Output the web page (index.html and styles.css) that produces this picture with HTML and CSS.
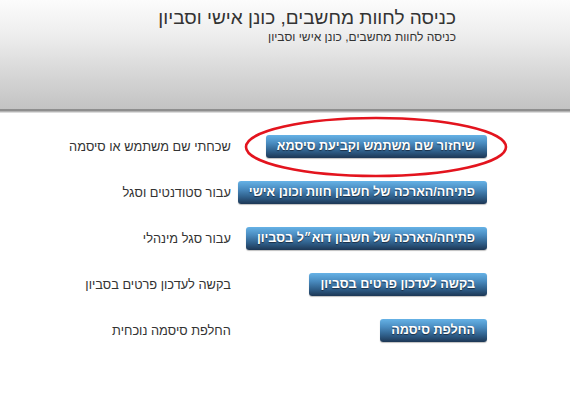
FILE: index.html
```html
<!DOCTYPE html>
<html lang="he" dir="rtl">
<head>
<meta charset="utf-8">
<title>כניסה לחוות מחשבים</title>
<link rel="stylesheet" href="styles.css">
</head>
<body>
<header class="hdr">
  <h1 class="hdr-title">כניסה לחוות מחשבים, כונן אישי וסביון</h1>
  <p class="hdr-sub">כניסה לחוות מחשבים, כונן אישי וסביון</p>
</header>
<main class="content">
  <div class="links">
    <a class="btn" href="#">שיחזור שם משתמש וקביעת סיסמא</a>
    <span class="lbl">שכחתי שם משתמש או סיסמה</span>
    <a class="btn" href="#">פתיחה/הארכה של חשבון חוות וכונן אישי</a>
    <span class="lbl">עבור סטודנטים וסגל</span>
    <a class="btn" href="#">פתיחה/הארכה של חשבון דוא״ל בסביון</a>
    <span class="lbl">עבור סגל מינהלי</span>
    <a class="btn" href="#">בקשה לעדכון פרטים בסביון</a>
    <span class="lbl">בקשה לעדכון פרטים בסביון</span>
    <a class="btn" href="#">החלפת סיסמה</a>
    <span class="lbl">החלפת סיסמה נוכחית</span>
  </div>
</main>
<svg class="mark" width="270" height="66" viewBox="0 0 270 66" aria-hidden="true">
  <ellipse cx="135" cy="33" rx="130" ry="29" fill="none" stroke="#e3141e" stroke-width="2.6"/>
</svg>
</body>
</html>
```
FILE: styles.css
```css
html, body {
  margin: 0;
  padding: 0;
  background: #ffffff;
}
body {
  font-family: "Liberation Sans", Arial, sans-serif;
  color: #333333;
  position: relative;
  min-height: 416px;
}
.hdr {
  height: 111px;
  box-sizing: border-box;
  padding: 5px 114px 0 0;
  background: linear-gradient(to bottom, #fcfcfc 0%, #ececec 35%, #d2d2d2 75%, #c3c3c3 100%);
  border-bottom: 2px solid #8e8e8e;
  box-shadow: 0 1px 0 #b4b4b4, 0 2px 0 #dcdcdc;
}
.hdr-title {
  margin: 0;
  font-size: 19px;
  font-weight: normal;
  line-height: 25px;
  color: #333333;
}
.hdr-sub {
  margin: 0;
  font-size: 12px;
  line-height: 14px;
  color: #333333;
}
.content {
  padding: 24px 83px 0 0;
}
.links {
  display: grid;
  grid-template-columns: auto auto;
  justify-content: start;
  justify-items: start;
  align-items: center;
  column-gap: 7px;
  row-gap: 23px;
}
.btn {
  display: inline-block;
  height: 23px;
  line-height: 23px;
  padding: 0 12px 0 11px;
  border-radius: 3px;
  background: linear-gradient(to bottom, #66b2e6 0%, #4a8cc0 35%, #2f5f8a 70%, #1d3755 100%);
  color: #ffffff;
  font-size: 12.6px;
  font-weight: bold;
  text-decoration: none;
  text-shadow: 0 1px 1px #1a2d44;
  white-space: nowrap;
  box-shadow: 0 1px 1px rgba(0,0,0,0.25);
}
.lbl {
  font-size: 12.8px;
  color: #333333;
  white-space: nowrap;
}
.mark {
  position: absolute;
  left: 241px;
  top: 114px;
}
```
